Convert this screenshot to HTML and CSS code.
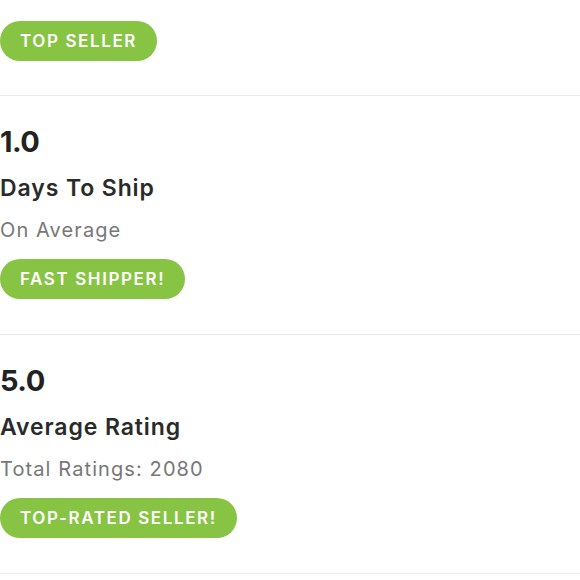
FILE: index.html
```html
<!DOCTYPE html>
<html>
<head>
<meta charset="utf-8">
<link rel="stylesheet" href="styles.css">
</head>
<body>
<div class="stats">
  <section class="stat stat-first">
    <span class="badge">TOP SELLER</span>
  </section>
  <section class="stat">
    <div class="value">1.0</div>
    <div class="label">Days To Ship</div>
    <div class="sub">On Average</div>
    <span class="badge">FAST SHIPPER!</span>
  </section>
  <section class="stat">
    <div class="value">5.0</div>
    <div class="label">Average Rating</div>
    <div class="sub">Total Ratings: 2080</div>
    <span class="badge">TOP-RATED SELLER!</span>
  </section>
</div>
</body>
</html>
```

FILE: styles.css
```css
html, body {
  margin: 0;
  padding: 0;
  background: #ffffff;
}
body {
  font-family: Inter, "Open Sans", "Liberation Sans", sans-serif;
  color: #262626;
}
.stats {
  display: flex;
  flex-direction: column;
}
.stat {
  display: flex;
  flex-direction: column;
  align-items: flex-start;
  padding: 28px 0 35px 0;
  border-bottom: 1px solid #ebebeb;
}
.stat-first {
  padding-top: 21px;
  padding-bottom: 34px;
}
.value {
  font-size: 29px;
  line-height: 36px;
  font-weight: 700;
  letter-spacing: -0.5px;
  color: #222;
}
.label {
  margin-top: 14px;
  font-size: 23px;
  line-height: 28px;
  font-weight: 600;
  letter-spacing: 0.9px;
  color: #2a2a2a;
}
.sub {
  margin-top: 16px;
  font-size: 20px;
  line-height: 24px;
  font-weight: 400;
  letter-spacing: 1.1px;
  color: #777;
}
.badge {
  display: inline-flex;
  align-items: center;
  height: 40px;
  padding: 0 20px;
  margin-top: 17px;
  border-radius: 20px;
  background: #88c443;
  color: #fff;
  font-size: 17px;
  font-weight: 600;
  letter-spacing: 1.6px;
}
.stat-first .badge {
  margin-top: 0;
}
```
